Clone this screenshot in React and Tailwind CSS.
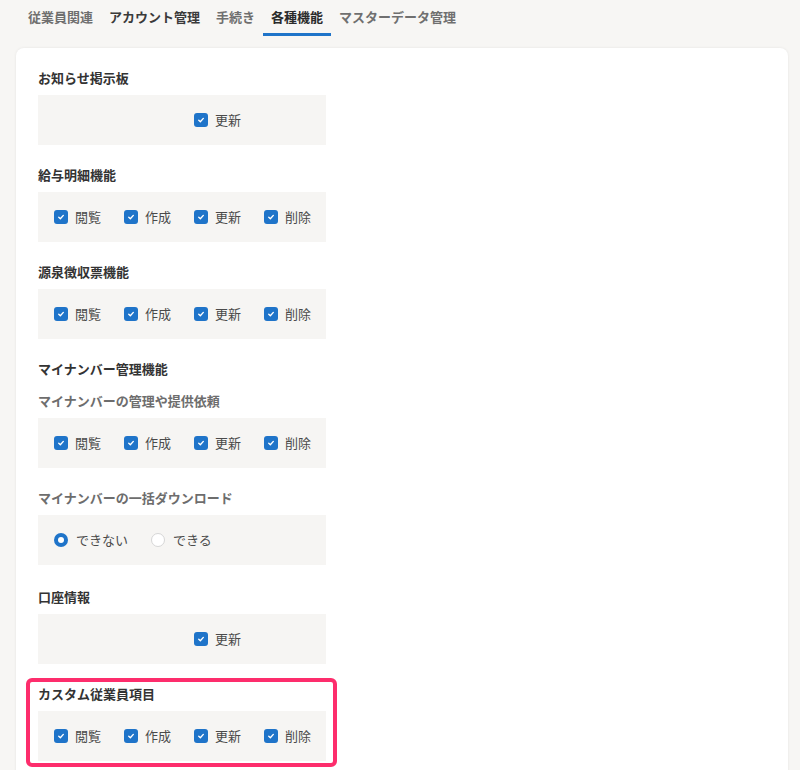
import React from 'react';

const tabs = [
  { label: '従業員関連', tone: 'text-[#6f6f6f]' },
  { label: 'アカウント管理', tone: 'text-[#3a3a3a]' },
  { label: '手続き', tone: 'text-[#6f6f6f]' },
  { label: '各種機能', tone: 'text-[#2b2b2b]', active: true },
  { label: 'マスターデータ管理', tone: 'text-[#6f6f6f]' },
];

const crud = ['閲覧', '作成', '更新', '削除'];

function Check({ label, className = '' }) {
  return (
    <label className={`flex items-center gap-[7px] ${className}`}>
      <span className="flex h-[14px] w-[14px] items-center justify-center rounded-[3px] bg-[#1f74c9]">
        <svg width="8" height="8" viewBox="0 0 10 10" fill="none">
          <path d="M2.2 5.2 4.2 7.1 7.9 3" stroke="#fff" strokeWidth="1.7" strokeLinecap="round" strokeLinejoin="round" />
        </svg>
      </span>
      <span className="text-[13px] text-[#4a4a4a]">{label}</span>
    </label>
  );
}

function Radio({ label, checked }) {
  return (
    <label className="flex items-center gap-[8px]">
      {checked ? (
        <span className="flex h-[14px] w-[14px] items-center justify-center rounded-full bg-[#1f74c9]">
          <span className="h-[6px] w-[6px] rounded-full bg-white" />
        </span>
      ) : (
        <span className="h-[14px] w-[14px] rounded-full border border-[#d6d6d6] bg-white" />
      )}
      <span className="text-[13px] text-[#4a4a4a]">{label}</span>
    </label>
  );
}

function Box({ children, grid = true }) {
  return (
    <div
      className={`h-[50px] w-[288px] bg-[#f6f5f3] pl-4 items-center ${
        grid ? 'grid grid-cols-[70px_70px_70px_1fr]' : 'flex gap-[23px]'
      }`}
    >
      {children}
    </div>
  );
}

function Heading({ children, sub }) {
  return (
    <h3
      className={`h-5 text-[13px] font-bold leading-5 ${sub ? 'text-[#6d6d6d]' : 'text-[#333]'}`}
    >
      {children}
    </h3>
  );
}

function Section({ title, sub, children, className = '' }) {
  return (
    <section className={className}>
      <Heading sub={sub}>{title}</Heading>
      <div className="mt-[7px]">{children}</div>
    </section>
  );
}

function CrudBox() {
  return (
    <Box>
      {crud.map((c) => (
        <Check key={c} label={c} />
      ))}
    </Box>
  );
}

export default function App() {
  return (
    <div
      className="min-h-[770px] bg-[#f7f6f4]"
      style={{ fontFamily: '"Noto Sans CJK JP", "Noto Sans", sans-serif' }}
    >
      <nav className="flex h-9 px-5">
        {tabs.map((t) => (
          <div
            key={t.label}
            className={`relative flex items-center px-2 pb-[3px] text-[13px] font-bold ${t.tone}`}
          >
            {t.label}
            {t.active && <span className="absolute bottom-0 left-0 right-0 h-[3px] bg-[#1f74c9]" />}
          </div>
        ))}
      </nav>

      <div className="ml-4 mr-3 mt-3 h-[740px] rounded-t-lg bg-white px-[22px] pt-5 shadow-[0_0_3px_rgba(0,0,0,0.08)]">
        <div className="flex flex-col">
          <Section title="お知らせ掲示板">
            <Box>
              <Check label="更新" className="col-start-3" />
            </Box>
          </Section>

          <Section title="給与明細機能" className="mt-5">
            <CrudBox />
          </Section>

          <Section title="源泉徴収票機能" className="mt-5">
            <CrudBox />
          </Section>

          <section className="mt-5">
            <Heading>マイナンバー管理機能</Heading>
            <Section title="マイナンバーの管理や提供依頼" sub className="mt-3">
              <CrudBox />
            </Section>
            <Section title="マイナンバーの一括ダウンロード" sub className="mt-5">
              <Box grid={false}>
                <Radio label="できない" checked />
                <Radio label="できる" />
              </Box>
            </Section>
          </section>

          <Section title="口座情報" className="mt-[22px]">
            <Box>
              <Check label="更新" className="col-start-3" />
            </Box>
          </Section>

          <div className="relative mt-5">
            <Section title="カスタム従業員項目">
              <CrudBox />
            </Section>
            <div className="pointer-events-none absolute -left-[12px] -top-[6px] -bottom-[6px] w-[311px] rounded-md border-4 border-[#fd2d6c]" />
          </div>
        </div>
      </div>
    </div>
  );
}
